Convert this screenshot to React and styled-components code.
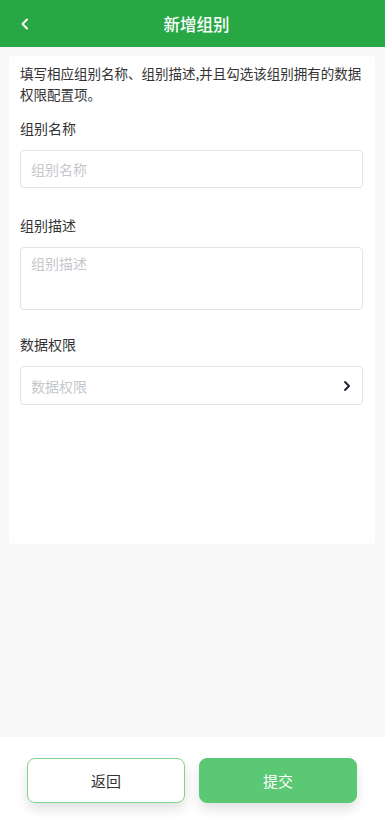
import React from "react";
import styled, { createGlobalStyle } from "styled-components";

const Global = createGlobalStyle`
  html, body {
    margin: 0;
    padding: 0;
    background: #f8f8f8;
    font-family: "Noto Sans CJK SC", "Noto Sans", sans-serif;
  }
  * { box-sizing: border-box; }
`;

const Page = styled.div`
  width: 385px;
  height: 837px;
  display: flex;
  flex-direction: column;
  background: #f8f8f8;
`;

const Header = styled.div`
  height: 47px;
  background: #28a745;
  display: flex;
  align-items: center;
  justify-content: center;
  position: relative;
  color: #fff;
  font-size: 16.5px;
  font-weight: 500;
  padding-left: 8px;
  flex-shrink: 0;
`;

const Back = styled.div`
  position: absolute;
  left: 18px;
  top: 17px;
  width: 14px;
  height: 14px;
  display: flex;
`;

const Body = styled.div`
  flex: 1;
  padding: 9px 10px 0 9px;
`;

const Card = styled.div`
  background: #fff;
  border-radius: 4px;
  padding: 7px 12px 0 11px;
  height: 488px;
`;

const Intro = styled.p`
  margin: 0;
  font-size: 13.5px;
  line-height: 21px;
  color: #333;
`;

const Label = styled.div`
  font-size: 14px;
  color: #333;
  line-height: 20px;
  margin-top: ${p => p.top}px;
`;

const Field = styled.div`
  margin-top: 12px;
  height: ${p => p.h}px;
  border: 1px solid #e2e3ea;
  border-radius: 4px;
  padding: ${p => (p.multi ? "5px 10px" : "0 10px")};
  display: flex;
  align-items: ${p => (p.multi ? "flex-start" : "center")};
  justify-content: space-between;
  font-size: 14px;
  color: #c6c7cc;
`;

const Footer = styled.div`
  height: 100px;
  background: #fff;
  display: flex;
  gap: 14px;
  padding: 21px 28px 0 27px;
  flex-shrink: 0;
`;

const Button = styled.div`
  flex: 1;
  height: 45px;
  border-radius: 8px;
  display: flex;
  align-items: center;
  justify-content: center;
  font-size: 15px;
  box-shadow: 0 6px 12px rgba(0, 0, 0, 0.12);
  background: ${p => (p.primary ? "#5ac874" : "#fff")};
  color: ${p => (p.primary ? "#fff" : "#333")};
  border: 1px solid ${p => (p.primary ? "#5ac874" : "#7fd493")};
`;

export default function App() {
  return (
    <Page>
      <Global />
      <Header>
        <Back>
          <svg width="14" height="14" viewBox="0 0 14 14">
            <path d="M9 2.5 L4.5 7 L9 11.5" fill="none" stroke="#fff" strokeWidth="2" strokeLinecap="round" strokeLinejoin="round" />
          </svg>
        </Back>
        新增组别
      </Header>
      <Body>
        <Card>
          <Intro>填写相应组别名称、组别描述,并且勾选该组别拥有的数据权限配置项。</Intro>
          <Label top={13}>组别名称</Label>
          <Field h={38}>组别名称</Field>
          <Label top={27}>组别描述</Label>
          <Field h={63} multi>组别描述</Field>
          <Label top={24}>数据权限</Label>
          <Field h={39}>
            数据权限
            <svg width="10" height="12" viewBox="0 0 10 12">
              <path d="M3 2 L7 6 L3 10" fill="none" stroke="#1a1a2e" strokeWidth="1.8" strokeLinecap="round" strokeLinejoin="round" />
            </svg>
          </Field>
        </Card>
      </Body>
      <Footer>
        <Button>返回</Button>
        <Button primary>提交</Button>
      </Footer>
    </Page>
  );
}
